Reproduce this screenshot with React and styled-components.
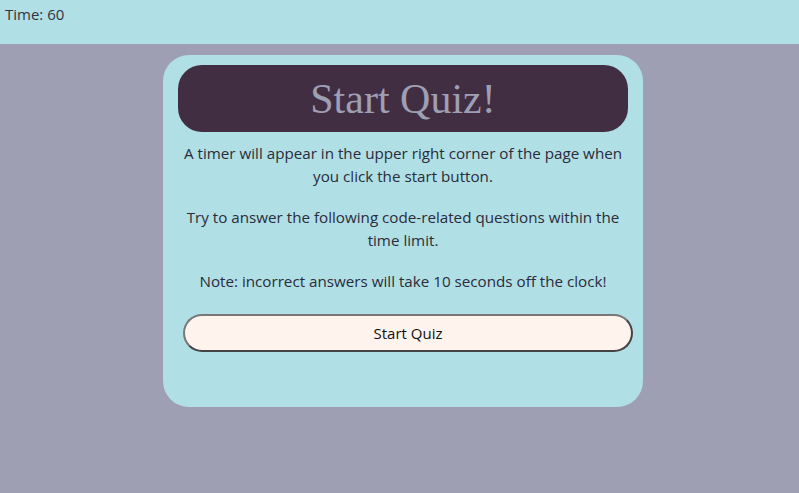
import React from 'react';
import styled, { createGlobalStyle } from 'styled-components';

const GlobalStyle = createGlobalStyle`
  html, body {
    margin: 0;
    padding: 0;
    background-color: #9f9fb4;
    font-family: "Open Sans", "Noto Sans", sans-serif;
    color: #2b2b3a;
  }
`;

const Header = styled.header`
  height: 44px;
  background-color: #b0dfe5;
  padding: 4px 5px 0;
  box-sizing: border-box;
  font-size: 15px;
  color: #33333f;
`;

const Main = styled.main`
  display: flex;
  justify-content: center;
  padding: 11px 0 0 7px;
`;

const Card = styled.section`
  width: 480px;
  height: 352px;
  box-sizing: border-box;
  background-color: #b0dfe5;
  border-radius: 26px;
  padding: 10px 15px;
  display: flex;
  flex-direction: column;
  align-items: center;
`;

const Title = styled.h1`
  margin: 0;
  width: 100%;
  height: 67px;
  display: flex;
  align-items: center;
  justify-content: center;
  background-color: #422e43;
  border-radius: 24px;
  font-family: "Liberation Serif", Georgia, serif;
  font-weight: normal;
  font-size: 42px;
  color: #9f9fb4;
`;

const Text = styled.p`
  margin: ${props => (props.first ? '10px' : '0')} 0 18px;
  padding: 0 4px;
  font-size: 15.2px;
  line-height: 23px;
  text-align: center;
  color: #2b2b3a;
`;

const StartButton = styled.button`
  width: 450px;
  height: 38px;
  margin: 3px 0 0 10px;
  background-color: #fff3ee;
  border: 2px solid #444;
  border-top-color: #777;
  border-left-color: #777;
  border-radius: 20px;
  font-family: "Open Sans", "Noto Sans", sans-serif;
  font-size: 15px;
  color: #111;
  cursor: pointer;
`;

const App = () => (
  <>
    <GlobalStyle />
    <Header>Time: 60</Header>
    <Main>
      <Card>
        <Title>Start Quiz!</Title>
        <Text first>
          A timer will appear in the upper right corner of the page when you click the start button.
        </Text>
        <Text>Try to answer the following code-related questions within the time limit.</Text>
        <Text>Note: incorrect answers will take 10 seconds off the clock!</Text>
        <StartButton>Start Quiz</StartButton>
      </Card>
    </Main>
  </>
);

export default App;
